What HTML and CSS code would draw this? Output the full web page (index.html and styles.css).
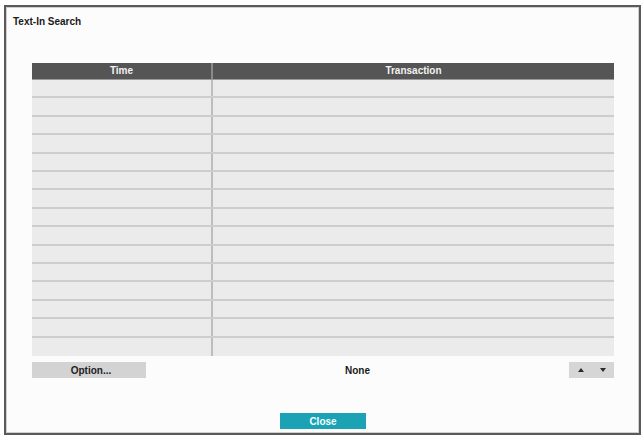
FILE: index.html
```html
<!DOCTYPE html>
<html lang="en">
<head>
<meta charset="utf-8">
<title>Text-In Search</title>
<link rel="stylesheet" href="styles.css">
</head>
<body>
<div class="dialog">
  <div class="dialog-title">Text-In Search</div>
  <div class="grid">
    <div class="grid-head">
      <div class="cell col-time">Time</div>
      <div class="cell col-trans">Transaction</div>
    </div>
    <div class="grid-body">
      <div class="row"><div class="cell col-time"></div><div class="cell col-trans"></div></div>
      <div class="row"><div class="cell col-time"></div><div class="cell col-trans"></div></div>
      <div class="row"><div class="cell col-time"></div><div class="cell col-trans"></div></div>
      <div class="row"><div class="cell col-time"></div><div class="cell col-trans"></div></div>
      <div class="row"><div class="cell col-time"></div><div class="cell col-trans"></div></div>
      <div class="row"><div class="cell col-time"></div><div class="cell col-trans"></div></div>
      <div class="row"><div class="cell col-time"></div><div class="cell col-trans"></div></div>
      <div class="row"><div class="cell col-time"></div><div class="cell col-trans"></div></div>
      <div class="row"><div class="cell col-time"></div><div class="cell col-trans"></div></div>
      <div class="row"><div class="cell col-time"></div><div class="cell col-trans"></div></div>
      <div class="row"><div class="cell col-time"></div><div class="cell col-trans"></div></div>
      <div class="row"><div class="cell col-time"></div><div class="cell col-trans"></div></div>
      <div class="row"><div class="cell col-time"></div><div class="cell col-trans"></div></div>
      <div class="row"><div class="cell col-time"></div><div class="cell col-trans"></div></div>
      <div class="row"><div class="cell col-time"></div><div class="cell col-trans"></div></div>
    </div>
  </div>
  <div class="controls">
    <button class="btn btn-option">Option...</button>
    <div class="status">None</div>
    <button class="btn btn-pager">
      <svg width="6" height="4" viewBox="0 0 6 4"><path d="M0 4 L3 0 L6 4 Z" fill="#2a2a2a"/></svg>
      <svg width="6" height="4" viewBox="0 0 6 4"><path d="M0 0 L6 0 L3 4 Z" fill="#2a2a2a"/></svg>
    </button>
  </div>
  <div class="footer">
    <button class="btn btn-close">Close</button>
  </div>
</div>
</body>
</html>
```
FILE: styles.css
```css
html, body {
  margin: 0;
  padding: 0;
  background: #ffffff;
}

body {
  padding: 5px 0 0 4px;
  font-family: "Liberation Sans", Arial, sans-serif;
  font-weight: bold;
  font-size: 10px;
  color: #111;
}

.dialog {
  box-sizing: border-box;
  width: 637px;
  height: 430px;
  border: 2px solid #5a5a5a;
  box-shadow: inset 0 0 0 1px #cfcfcf;
  background: #fcfcfc;
  padding: 0 25px 0 26px;
  display: flex;
  flex-direction: column;
}

.dialog-title {
  margin: 9px 0 0 -19px;
  height: 11px;
  line-height: 11px;
  font-size: 10px;
  color: #1a1a1a;
}

.grid {
  margin-top: 36px;
  width: 582px;
}

.grid-head {
  display: flex;
  height: 16px;
  background: #555555;
  color: #f2f2f2;
  border-bottom: 1px solid #9a9a9a;
}

.grid-head .cell {
  text-align: center;
  line-height: 16px;
  font-size: 10px;
}

.cell.col-time {
  box-sizing: border-box;
  width: 181px;
  border-right: 2px solid #bdbdbd;
}

.grid-head .cell.col-time {
  border-right-color: #8a8a8a;
}

.cell.col-trans {
  flex: 1;
}

.grid-body {
  display: grid;
  grid-template-rows: repeat(15, 1fr);
  height: 276px;
  background: #ebebeb;
}

.row {
  box-sizing: border-box;
  display: flex;
  border-bottom: 2px solid #cdcdcd;
}

.row:last-child {
  border-bottom: none;
}

.controls {
  margin-top: 6px;
  width: 582px;
  height: 16px;
  display: grid;
  grid-template-columns: 114px 1fr 45px;
  align-items: center;
}

.btn {
  font-family: inherit;
  font-weight: bold;
  font-size: 10px;
  border: none;
  margin: 0;
  padding: 0;
  height: 16px;
  cursor: pointer;
}

.btn-option {
  background: #d3d3d3;
  color: #222;
  padding-left: 4px;
}

.status {
  text-align: center;
  color: #1a1a1a;
}

.btn-pager {
  background: #d6d6d6;
  display: flex;
  align-items: center;
  justify-content: center;
  gap: 16px;
}

.footer {
  margin-top: 35px;
  width: 582px;
  display: flex;
  justify-content: center;
}

.btn-close {
  width: 86px;
  background: #1ba2b4;
  color: #f4ffff;
}
```
